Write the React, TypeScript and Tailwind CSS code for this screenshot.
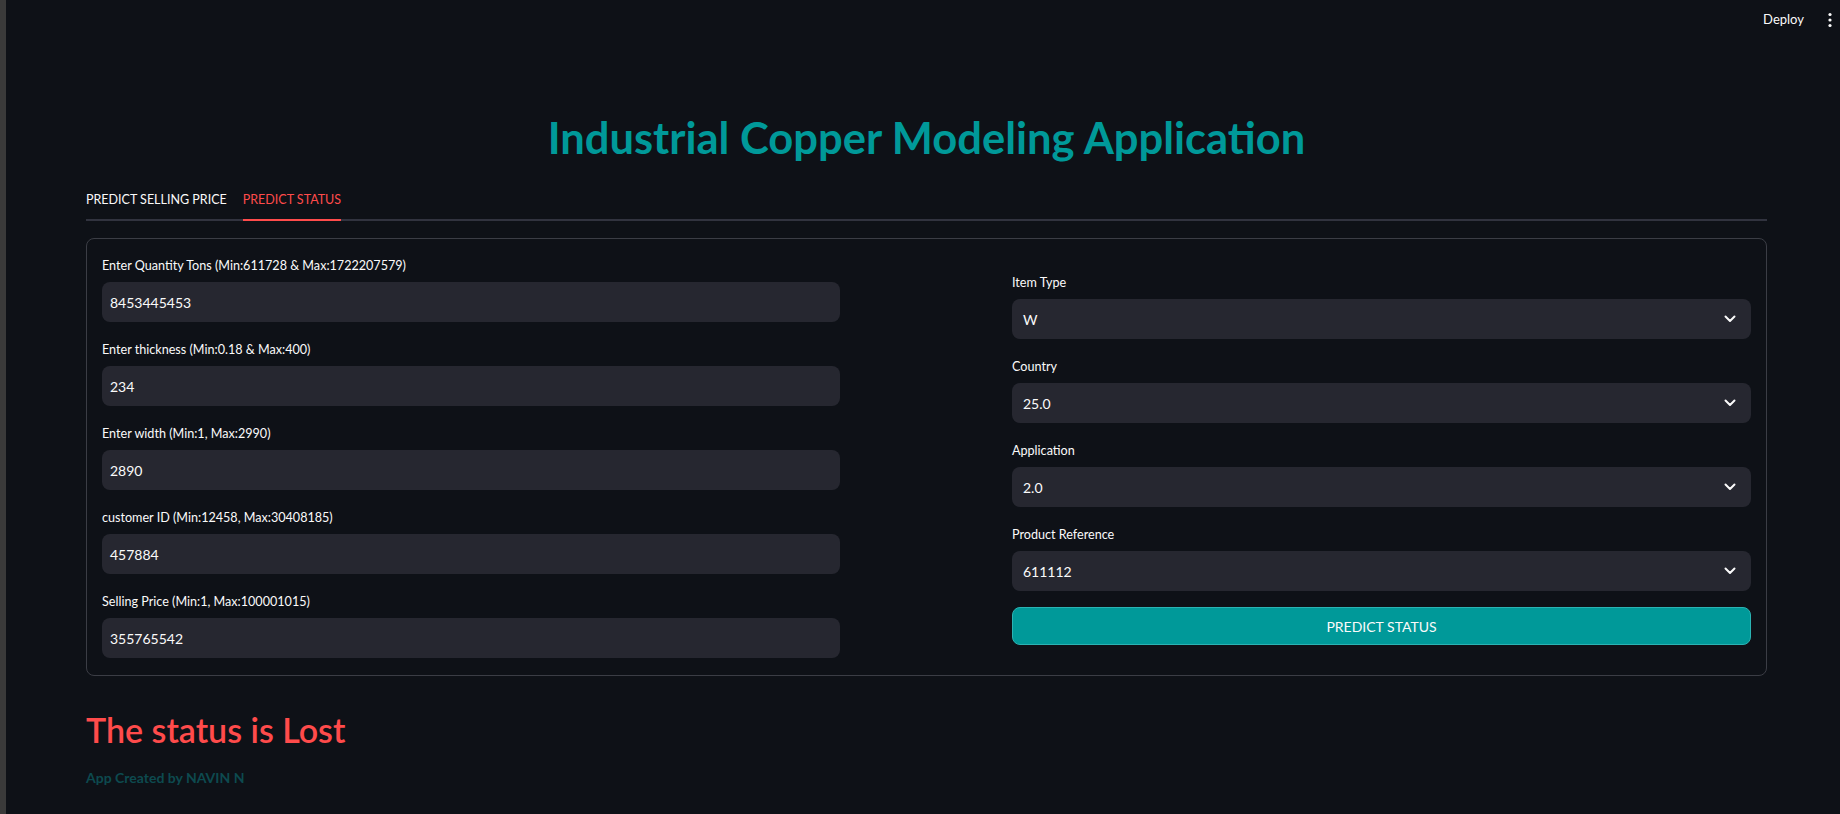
import React from "react";

const FONT = { fontFamily: "Lato, 'Noto Sans', sans-serif" };

function Chevron() {
  return (
    <svg width="12" height="8" viewBox="0 0 12 8" fill="none">
      <path d="M1.5 1.5 L6 6 L10.5 1.5" stroke="#fafafa" strokeWidth="2" strokeLinecap="round" strokeLinejoin="round" />
    </svg>
  );
}

function Field({ label, value }: { label: string; value: string }) {
  return (
    <div className="flex flex-col">
      <div className="h-[24px] flex items-center pt-[1px] text-[12.6px] text-[#fafafa]">{label}</div>
      <div className="mt-[4px] h-[40px] rounded-lg bg-[#262730] flex items-center px-[8px] text-[14px] text-[#fafafa]">
        {value}
      </div>
    </div>
  );
}

function SelectField({ label, value }: { label: string; value: string }) {
  return (
    <div className="flex flex-col">
      <div className="h-[24px] flex items-center pt-[1px] text-[12.6px] text-[#fafafa]">{label}</div>
      <div className="mt-[4px] h-[40px] rounded-lg bg-[#262730] flex items-center justify-between pl-[11px] pr-[15px] text-[14px] text-[#fafafa]">
        <span>{value}</span>
        <Chevron />
      </div>
    </div>
  );
}

export default function App() {
  return (
    <div className="flex min-h-screen h-[814px] bg-[#0e1117] overflow-hidden" style={FONT}>
      <div className="w-[6px] shrink-0 bg-[#3a3a3a]" />
      <div className="flex-1 flex flex-col">
        <div className="h-[40px] flex items-center justify-end pr-[4px]">
          <span className="text-[13px] text-[#fafafa] mr-[24px]">Deploy</span>
          <svg width="4" height="16" viewBox="0 0 4 16" className="mr-[4px]">
            <circle cx="2" cy="2.5" r="1.6" fill="#fafafa" />
            <circle cx="2" cy="8" r="1.6" fill="#fafafa" />
            <circle cx="2" cy="13.5" r="1.6" fill="#fafafa" />
          </svg>
        </div>
        <div className="pl-[80px] w-[1761px]">
          <div className="mt-[72px] h-[52px] flex items-center justify-center">
            <h1 className="text-[43.5px] font-bold text-[#009999] leading-none">Industrial Copper Modeling Application</h1>
          </div>
          <div className="mt-[16px] flex gap-[16px] border-b-2 border-[#31333f] text-[12.5px]">
            <div className="h-[41px] -mb-[2px] pt-[2px] border-b-2 border-transparent flex items-center text-[#fafafa]">PREDICT SELLING PRICE</div>
            <div className="h-[41px] -mb-[2px] pt-[2px] border-b-2 border-[#ff4b4b] flex items-center text-[#ff4b4b]">PREDICT STATUS</div>
          </div>
          <div className="mt-[17px] border border-[#3b3d45] rounded-lg pt-[15px] px-[15px] pb-[17px] flex justify-between items-center">
            <div className="w-[738px] flex flex-col gap-[16px]">
              <Field label="Enter Quantity Tons (Min:611728 & Max:1722207579)" value="8453445453" />
              <Field label="Enter thickness (Min:0.18 & Max:400)" value="234" />
              <Field label="Enter width (Min:1, Max:2990)" value="2890" />
              <Field label="customer ID (Min:12458, Max:30408185)" value="457884" />
              <Field label="Selling Price (Min:1, Max:100001015)" value="355765542" />
            </div>
            <div className="w-[739px] flex flex-col gap-[16px] mt-[4px]">
              <SelectField label="Item Type" value="W" />
              <SelectField label="Country" value="25.0" />
              <SelectField label="Application" value="2.0" />
              <SelectField label="Product Reference" value="611112" />
              <button className="h-[38px] rounded-lg bg-[#009999] border border-[#2bb3b3] text-[#fafafa] text-[14px]">
                PREDICT STATUS
              </button>
            </div>
          </div>
          <div className="mt-[30px] h-[48px] flex items-center">
            <h2 className="text-[34px] font-semibold text-[#ff4b4b] leading-none">The status is Lost</h2>
          </div>
          <div className="mt-[11px] h-[24px] flex items-center">
            <span className="text-[14px] font-bold text-[#0d4a4f]">App Created by NAVIN N</span>
          </div>
        </div>
      </div>
    </div>
  );
}
